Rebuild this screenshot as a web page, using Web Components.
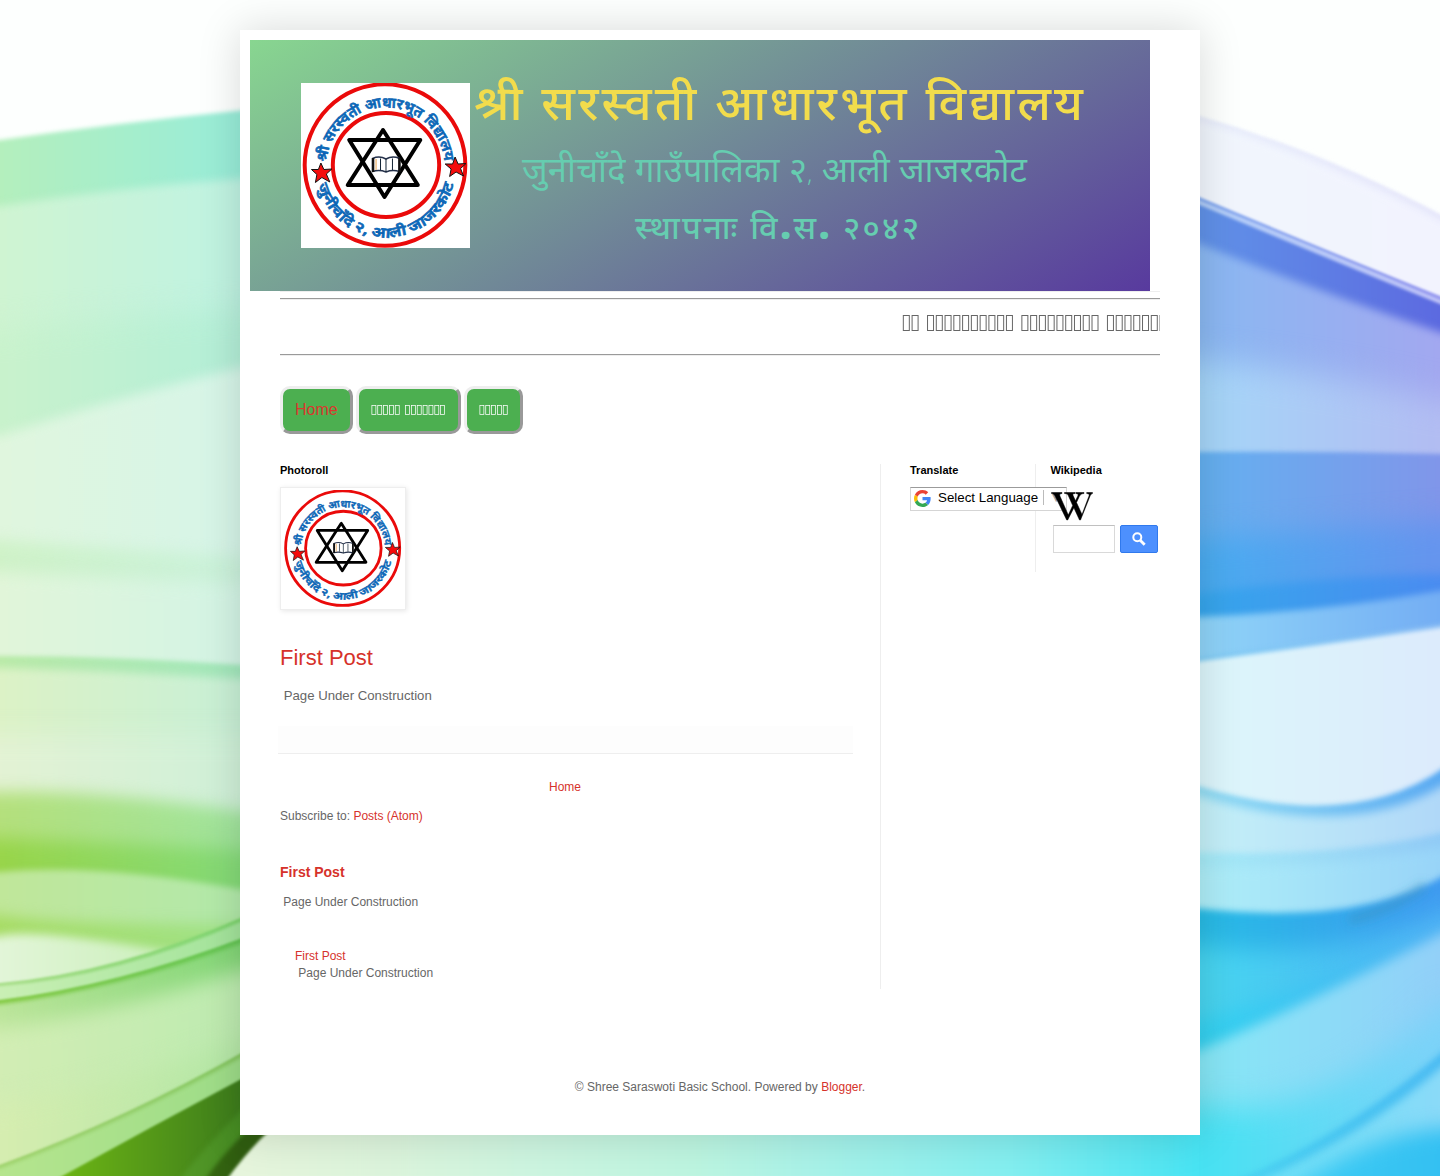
<!DOCTYPE html>
<html lang="ne">
<head>
<meta charset="utf-8">
<title>Shree Saraswoti Basic School</title>
<style>
html,body{margin:0;padding:0}
body{font:12px/16px "Liberation Sans",Arial,sans-serif;color:#666;background:#fdfffe;width:1440px;height:1176px;overflow:hidden}
</style>
</head>
<body>
<school-page></school-page>
<script>
const define=(name,html,after)=>customElements.define(name,class extends HTMLElement{
  constructor(){super();this.attachShadow({mode:'open'}).innerHTML=html;}
  connectedCallback(){if(after)after.call(this,this.shadowRoot);}
});

/* Each wave fills from its upper edge down to the bottom: [points, left colour, right colour, blur] */
const LEFT=[
 [[0,140,120,124,245,110],'#b4efbd','#98edd9',2],
 [[0,206,120,190,245,178],'#cff4d2','#bff3e2',4],
 [[0,330,120,318,245,310],'#c9f2cc','#b3efd8',14],
 [[0,436,110,402,245,366],'#e0f6de','#d6f5e8',6],
 [[0,540,110,548,245,556],'#cff2c8','#cbf2dc',7],
 [[0,572,110,578,245,584],'#e1f5d9','#d3f4e5',8],
 [[0,656,110,658,245,665],'#b9eaa8','#a3e8bd',2],
 [[0,668,110,672,245,679],'#dcf2c6','#c8f0d6',4],
 [[0,735,110,735,245,735],'#e3f2d4','#cff0d8',12],
 [[0,792,110,796,245,812],'#b4e07c','#a0e49c',8],
 [[0,838,110,843,245,850],'#98d54a','#84da78',9],
 [[0,872,110,872,245,890],'#c0e79a','#b2e9aa',3],
 [[0,915,90,922,245,924],'#a6dc64','#a0e288',7],
 [[0,936,80,938,245,965],'#e2f5d8','#c2edb0',5],
 [[0,983,120,961,245,916],'#a6dd86','#7dd46e',1.2],
 [[0,986,120,965,245,920],'#c9efb4','#a2e39a',1.8],
 [[0,1000,120,977,245,937],'#7fc83c','#62c452',1],
 [[0,1004,120,981,245,942],'#bbe59a','#82d676',2],
 [[0,1028,120,1005,245,968],'#d2edb4','#bdebb0',10],
 [[0,1105,120,1080,245,1040],'#d6edb0','#b2e6a4',12],
 [[0,1165,125,1113,245,1051],'#9bcf66','#80c25a',1],
 [[0,1168,125,1116,245,1055],'#b5e58e','#9ddc88',2],
 [[55,1180,150,1128,245,1077],'#7cc812','#3d7c1c',1.2],
 [[178,1182,213,1140,262,1090],'#84c83a','#458a22',2.5],
 [[204,1182,232,1146,275,1105],'#58a50e','#2f5c10',2]
];
const RIGHT=[
 [[1195,115,1320,158,1445,217],'#e6ebfb','#e3e4fa',1.5],
 [[1195,119,1320,163,1445,222],'#f1f6fd','#f2f3fe',4],
 [[1195,195,1320,247,1445,298],'#8cb0f0','#9a9cf0',1.2],
 [[1195,199,1320,250,1445,302],'#b4d0f8','#c0c4f8',1],
 [[1195,203,1320,255,1445,306],'#6092e8','#5c6ae0',1.5],
 [[1195,242,1320,290,1445,334],'#8ab8f2','#a2a8f0',4],
 [[1195,360,1320,375,1445,400],'#a5d6f8','#b2bcf2',16],
 [[1195,452,1320,452,1445,454],'#64b0f0','#8096ea',2],
 [[1195,540,1320,530,1445,520],'#48acf0','#6694ee',14],
 [[1195,594,1320,580,1445,574],'#36a6ec','#4a8cf0',5],
 [[1195,617,1320,608,1445,590],'#8fd4f8','#74aef4',3],
 [[1195,658,1320,641,1445,623],'#80ccf4','#88bcf4',2],
 [[1195,662,1320,645,1445,627],'#dcf6fb','#dcebfc',2],
 [[1195,785,1335,805,1445,767],'#8fdcf4','#5aaaf2',2.5],
 [[1195,795,1335,816,1445,784],'#c4f0f8','#b0d8f8',5],
 [[1195,852,1330,850,1445,832],'#a6ebf7','#90caf6',3],
 [[1195,868,1330,862,1445,846],'#aeeef8','#98d4f8',6],
 [[1195,908,1340,909,1445,875],'#28bce6','#3e9af0',3],
 [[1195,945,1330,945,1445,905],'#48d6f0','#4ab0f4',12],
 [[1195,1020,1300,985,1445,920],'#34d2f0','#52b4f4',8],
 [[1195,1052,1310,1000,1445,932],'#86e7f6','#92d0f8',6],
 [[1195,1105,1320,1090,1445,1000],'#46e2f2','#7cd2f8',16],
 [[1225,1186,1340,1127,1445,1050],'#46d4f0','#48baf2',3],
 [[1245,1186,1350,1134,1445,1064],'#60e2f6','#8adaf8',4],
 [[1290,1190,1370,1146,1445,1128],'#44d4f4','#34c0f2',10]
];
define('wave-backdrop','<style>:host{display:block;width:1440px;height:1176px}svg{display:block}</style><div></div>',function(root){
  let defs='',out='';
  const add=(list,x0,x1,clip)=>{
    out+=`<g clip-path="url(#${clip})">`;
    list.forEach(([p,a,b,blur],i)=>{
      const id=clip+i;
      defs+=`<linearGradient id="g${id}" gradientUnits="userSpaceOnUse" x1="${x0}" y1="0" x2="${x1}" y2="0"><stop stop-color="${a}"/><stop offset="1" stop-color="${b}"/></linearGradient><filter id="f${id}" color-interpolation-filters="sRGB" filterUnits="userSpaceOnUse" x="-100" y="0" width="1640" height="1300"><feGaussianBlur stdDeviation="${blur}"/></filter>`;
      const [ax,ay,mx,my,bx,by]=p, cx=2*mx-(ax+bx)/2, cy=2*my-(ay+by)/2;
      const l=ax<=0||ax===1195?ax-60:ax;
      out+=`<path fill="url(#g${id})" filter="url(#f${id})" d="M${l} ${ay}L${ax} ${ay}Q${cx} ${cy} ${bx} ${by}L${bx+50} ${by}V1290H${l}Z"/>`;
    });
    out+='</g>';
  };
  add(LEFT,0,240,'lc');
  out+='<path d="M222 1186Q246 1152 270 1130H1215V1186Z" fill="url(#bot)" filter="url(#bb)"/>';
  add(RIGHT,1200,1440,'rc');
  /* dusky smudge where two ribbons cross on the right */
  out+='<path d="M1350 920Q1395 908 1425 885" stroke="#3a8fb4" stroke-opacity=".4" stroke-width="9" fill="none" filter="url(#sm)"/>';
  root.querySelector('div').innerHTML=`<svg width="1440" height="1176" viewBox="0 0 1440 1176"><defs>
   <clipPath id="lc"><rect width="300" height="1176"/></clipPath><clipPath id="rc"><rect x="1199" width="241" height="1176"/></clipPath>
   <filter id="bb"><feGaussianBlur stdDeviation="1.5"/></filter><filter id="sm" x="-50%" y="-80%" width="200%" height="260%"><feGaussianBlur stdDeviation="5"/></filter>
   <linearGradient id="bot" gradientUnits="userSpaceOnUse" x1="240" y1="0" x2="1200" y2="0"><stop stop-color="#e6f5dc"/><stop offset=".15" stop-color="#dcf4dc"/><stop offset=".3" stop-color="#cdf5e0"/><stop offset=".47" stop-color="#bdf5e0"/><stop offset=".6" stop-color="#a8f2e8"/><stop offset=".8" stop-color="#84eff0"/><stop offset="1" stop-color="#48e3f3"/></linearGradient>
   ${defs}</defs><rect width="1440" height="1176" fill="#fdfffe"/>${out}</svg>`;
});

define('school-crest',`<style>:host{display:block}svg{display:block;width:100%;height:100%}text{font:600 14.500px "Noto Sans Devanagari","Noto Sans",sans-serif;fill:#0b6fc4;stroke:#0b5fae;stroke-width:.6}</style>
<svg viewBox="0 0 170 165" preserveAspectRatio="none">
<defs><path id="top" d="M25.500 84A59.500 59.500 0 0 1 144.500 84"/><path id="low" d="M14.500 84A70.500 70.500 0 0 0 155.500 84"/></defs>
<rect width="170" height="165" fill="#fff"/>
<g fill="none" stroke="#ea0a0a"><circle cx="84.500" cy="82" r="80.800" stroke-width="4"/><ellipse cx="85.500" cy="82" rx="53.500" ry="52" stroke-width="4"/></g>
<text><textPath href="#top" startOffset="5" textLength="176" lengthAdjust="spacingAndGlyphs">श्री सरस्वती आधारभूत विद्यालय</textPath></text>
<text><textPath href="#low" startOffset="18" textLength="186" lengthAdjust="spacingAndGlyphs">जुनीचाँदे २, आली जाजरकोट</textPath></text>
<g fill="none" stroke="#000" stroke-width="4" stroke-linejoin="round"><path d="M82.500 47L47 102H117.500Z"/><path d="M48.500 57H120L84 114Z"/></g>
<g stroke-linejoin="round"><path d="M72 75.500Q79 72.500 85.500 76Q92 72.500 99 75.500V88.500Q92 86.500 85.500 89Q79 86.500 72 88.500Z" fill="#fff" stroke="#24304a" stroke-width="1.500"/><path d="M72.500 75V89M99 75V89" stroke="#111" stroke-width="2.500"/><path d="M75.500 76V87" stroke="#e8a04a"/><path d="M85.500 76V89M80 75.500V87M92 75.500V87" stroke="#123" stroke-width="1"/></g>
<g fill="#f50c0c" stroke="#111" stroke-width="1"><path d="M20 80L23 86.500L31 86L25.500 91L29 99L21 94.500L14.500 99.500L16 91.500L10.500 86.500L17.500 86.500Z"/><path d="M155 74L158 81L166 80.500L160.500 85.500L163.500 93L156 89L149.500 93.500L151 86L145 81L152.500 81Z"/></g>
</svg>`);

define('school-banner',`<style>:host{display:block;position:relative;width:900px;height:251px;background:linear-gradient(150deg,#88d690,#583a9e)}
school-crest{position:absolute;left:51px;top:43px;width:169px;height:165px}
svg{position:absolute;inset:0}text{font-family:"Noto Sans Devanagari","Noto Sans",sans-serif}</style>
<school-crest></school-crest>
<svg width="900" height="251"><text x="224" y="79.500" font-size="48.500" font-weight="500" textLength="609" fill="#f2dc4c">श्री सरस्वती आधारभूत विद्यालय</text>
<g fill="#66cdb0"><text x="272" y="141.500" font-size="34.500" textLength="505">जुनीचाँदे गाउँपालिका २<tspan font-size="22" font-weight="300">,</tspan> आली जाजरकोट</text>
<text x="385" y="199" font-size="32.500" font-weight="500" textLength="284">स्थापनाः वि<tspan font-weight="900" font-size="38">.</tspan>स<tspan font-weight="900" font-size="38">.</tspan> २०४२</text></g></svg>`);

/* Words set in empty glyph boxes; "words" lists the box count of each word, "size" is the font size in px */
define('glyph-boxes','<style>:host{display:block;flex:none}svg{display:block;overflow:visible}</style><div></div>',function(root){
  const size=+this.getAttribute('size'),pitch=size*.3653,gap=size*.278,h=size*.655,w=size*.25;
  let x=0,out='';
  this.getAttribute('words').split(' ').forEach(n=>{
    for(let i=0;i<+n;i++){out+=`<rect x="${(x+size*.055).toFixed(2)}" y=".5" width="${w.toFixed(2)}" height="${Math.round(h)-1}"/>`;x+=pitch;}
    x+=gap;
  });
  root.querySelector('div').innerHTML=`<svg width="${(x-gap).toFixed(2)}" height="${Math.round(h)}" fill="none" stroke="currentColor" stroke-width="${size>20?1:.75}">${out}</svg>`;
});

define('news-ticker',`<style>:host{display:block;height:58px}.hr{height:1px;border-top:1px solid #9a9a9a;background:#eee}
.t{height:54px;overflow:hidden;padding:15px 0 0 622px;box-sizing:border-box}</style><div class="hr"></div><div class="t"><slot></slot></div><div class="hr"></div>`);

define('nav-tab',`<style>:host{display:flex;align-items:center;box-sizing:border-box;height:48px;padding:0 12px 1px;border:3px solid;border-color:#eee #999 #999 #eee;border-radius:10px;background:#4caf50;font-size:16px;line-height:19px;color:#fff;white-space:nowrap}
:host([active]){color:#d9382e}</style><slot></slot>`);
define('nav-tabs','<style>:host{display:flex;gap:3.330px}</style><slot></slot>');

define('side-heading','<style>:host{display:block;font-weight:bold;font-size:11px;line-height:13px;color:#000}</style><slot></slot>');
define('text-link','<style>:host{display:inline;color:#d6322b}</style><slot></slot>');

define('photo-frame',`<style>:host{display:block;box-sizing:border-box;width:126px;height:123px;padding:2px;border:1px solid #eee;background:#fff;box-shadow:1px 1px 5px rgba(0,0,0,.1)}school-crest{width:120px;height:117px}</style><school-crest></school-crest>`);

define('blog-column',`<style>:host{display:block;width:601px;height:525px;box-sizing:border-box;border-right:1px solid #eee;padding-right:30px}
photo-frame{margin-top:10px}
.title{font-size:22px;line-height:25px;margin-top:35px}
.body{font-size:13.200px;line-height:18px;margin-top:17px;white-space:pre}
.foot{height:27px;margin:21px -3px 0 -2px;background:#fdfdfd;border-bottom:1px solid #eee}
.home{text-align:center;margin-top:25px}.sub{margin-top:13px}
.pop{font-size:14px;font-weight:bold;margin-top:40px}.p{white-space:pre;margin-top:14px}
.item{padding-left:15px;margin-top:38px}.item .p{margin-top:1px}</style>
<side-heading>Photoroll</side-heading><photo-frame></photo-frame>
<div class="title"><text-link>First Post</text-link></div>
<div class="body">&nbsp;Page Under Construction</div>
<div class="foot"></div>
<div class="home"><text-link>Home</text-link></div>
<div class="sub">Subscribe to: <text-link>Posts (Atom)</text-link></div>
<div class="pop"><text-link>First Post</text-link></div>
<div class="p">&nbsp;Page Under Construction</div>
<div class="item"><text-link>First Post</text-link><div class="p">&nbsp;Page Under Construction</div></div>`);

define('translate-box',`<style>:host{display:flex;box-sizing:border-box;width:157px;height:24px;margin-top:10px;border:1px solid #d5d5d5;border-top-color:#9b9b9b;padding:2px 0 0 3px;font-size:13.330px;line-height:15px;color:#000;background:#fff;white-space:nowrap}
svg{display:block;width:17px;height:17px;margin:0 7px 0 0;flex:none}i{width:1px;height:15px;background:#bbb;margin:0 8px 0 5px}.a{font:11px/15px "DejaVu Sans",sans-serif;color:#9b9b9b}</style>
<svg viewBox="0 0 48 48"><path fill="#EA4335" d="M24 9.500c3.540 0 6.710 1.220 9.210 3.600l6.850-6.850C35.900 2.380 30.470 0 24 0 14.620 0 6.510 5.380 2.560 13.220l7.980 6.190C12.430 13.720 17.740 9.500 24 9.500z"/><path fill="#4285F4" d="M46.980 24.550c0-1.570-.15-3.090-.38-4.550H24v9.020h12.940c-.58 2.960-2.260 5.480-4.780 7.180l7.730 6c4.510-4.180 7.090-10.360 7.090-17.650z"/><path fill="#FBBC05" d="M10.530 28.590c-.48-1.450-.76-2.990-.76-4.590s.27-3.140.76-4.590l-7.980-6.190C.92 16.460 0 20.120 0 24c0 3.880.92 7.540 2.560 10.780l7.970-6.190z"/><path fill="#34A853" d="M24 48c6.480 0 11.930-2.130 15.890-5.810l-7.730-6c-2.150 1.450-4.920 2.300-8.160 2.300-6.260 0-11.570-4.220-13.470-9.910l-7.980 6.190C6.510 42.620 14.620 48 24 48z"/></svg><span>Select Language</span><i></i><span class="a">▼</span>`);

define('wiki-search',`<style>:host{display:block}.w{display:block;width:42px;height:29px;margin:15px 0 0 .5px;overflow:visible;position:relative}
.row{display:flex;gap:5px;margin:4px 0 0 2.500px}.in{box-sizing:border-box;width:62px;height:28px;background:#fff;border:1px solid #d9d9d9;border-top-color:#c0c0c0}
.b{box-sizing:border-box;width:38px;height:28px;background:#4d90fe;border:1px solid #3079ed;border-radius:2px;display:flex;align-items:center;justify-content:center}</style>
<svg class="w" viewBox="0 0 42 29" stroke="#000" stroke-width=".5"><path d="M0.500 .5H11V1.500C8.500 1.700 8.200 2.500 8.900 4L17.300 23L21.700 13.500L17.500 4C16.700 2.200 16 1.600 13.500 1.500V.5H24V1.500C21.700 1.700 21.500 2.300 22.200 3.800L24.500 8.800L26.700 4.200C27.500 2.400 27.200 1.700 24.800 1.500V.5H33V1.500C30.300 1.700 29.300 2.600 28.400 4.300L25.500 10.500L31 22.500L37.800 4.500C38.600 2.400 38.200 1.700 35.700 1.500V.5H41.500V1.500C40.300 1.800 39.700 2.600 38.800 4.700L29.500 28H28.500L22.900 15.800L16.700 28H15.700L4.200 4.200C3.200 2.200 2.500 1.600 .5 1.500Z"/></svg>
<div class="row"><div class="in"></div><div class="b"><svg width="14" height="14" viewBox="0 0 14 14" fill="none" stroke="#fff"><circle cx="5.300" cy="5.300" r="4" stroke-width="2"/><path d="M8.200 8.200L12.700 12.700" stroke-width="2.800"/></svg></div></div>`);

define('side-bar',`<style>:host{display:flex;height:108px;width:250px;margin-left:29px}.l{width:125px;border-right:1px solid #eee;flex:none}.r{padding-left:14.500px;flex:none}</style>
<div class="l"><side-heading>Translate</side-heading><translate-box></translate-box></div>
<div class="r"><side-heading>Wikipedia</side-heading><wiki-search></wiki-search></div>`);

define('school-page',`<style>:host{display:grid}wave-backdrop,main{grid-area:1/1}
main{position:relative;box-sizing:border-box;width:960px;height:1105px;margin:30px auto 0;background:#fff;box-shadow:0 0 40px rgba(0,0,0,.15);padding-top:10px}
school-banner{margin-left:10px}.in{margin:0 40px;border-top:1px solid #eee}news-ticker{margin-top:6px}nav-tabs{margin-top:30px}
.cols{display:flex;margin-top:30px}footer{text-align:center;margin-top:90px}</style>
<wave-backdrop></wave-backdrop>
<main><school-banner></school-banner><div class="in">
<news-ticker><glyph-boxes size="24" words="2 10 9 8"></glyph-boxes></news-ticker>
<nav-tabs><nav-tab active>Home</nav-tab><nav-tab><glyph-boxes size="16" words="5 7"></glyph-boxes></nav-tab><nav-tab><glyph-boxes size="16" words="5"></glyph-boxes></nav-tab></nav-tabs>
<div class="cols"><blog-column></blog-column><side-bar></side-bar></div></div>
<footer>© Shree Saraswoti Basic School. Powered by <text-link>Blogger</text-link>.</footer></main>`);
</script>
</body>
</html>
